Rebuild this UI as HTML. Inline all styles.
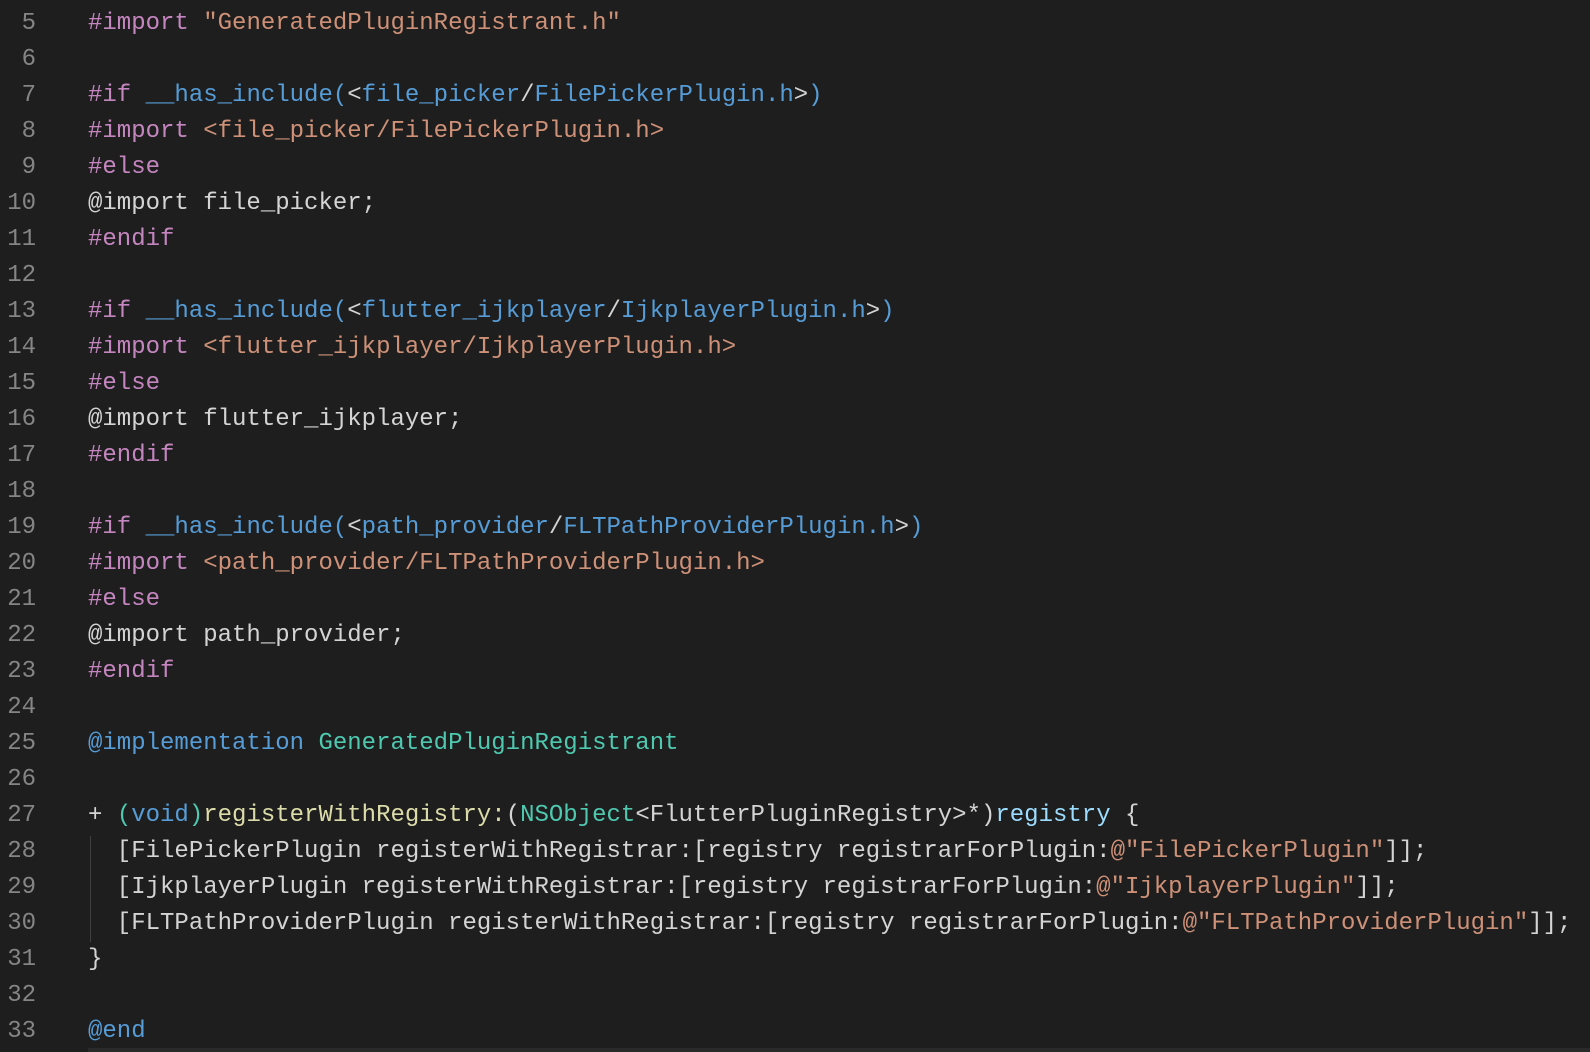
<!DOCTYPE html>
<html><head><meta charset="utf-8"><style>
body{margin:0;width:1590px;height:1052px;background:#1e1e1e;overflow:hidden;font-family:"Liberation Mono",monospace;font-size:24px;color:#d4d4d4}
#w{position:absolute;left:0;top:3px;width:1590px;height:1049px}
.l{position:absolute;left:0;height:36px;line-height:36px;white-space:pre;width:1590px}
.n{position:absolute;right:1554px;color:#858585;text-align:right}
.c{position:absolute;left:88px}
.k{color:#c586c0}.s{color:#ce9178}.b{color:#569cd6}.t{color:#4ec9b0}.y{color:#dcdcaa}.p{color:#9cdcfe}
.g{position:absolute;left:90px;top:833px;width:1px;height:106px;background:#404040}
.bot{position:absolute;left:88px;top:1048px;width:1502px;height:4px;background:#2a2a2a}
</style></head><body>
<div class="bot"></div>
<div id="w">
<div class="g"></div>
<div class="l" style="top:3px"><span class="n">5</span><span class="c"><span class="k">#import</span> <span class="s">"GeneratedPluginRegistrant.h"</span></span></div>
<div class="l" style="top:39px"><span class="n">6</span></div>
<div class="l" style="top:75px"><span class="n">7</span><span class="c"><span class="k">#if</span> <span class="b">__has_include(</span>&lt;<span class="b">file_picker</span>/<span class="b">FilePickerPlugin.h</span>&gt;<span class="b">)</span></span></div>
<div class="l" style="top:111px"><span class="n">8</span><span class="c"><span class="k">#import</span> <span class="s">&lt;file_picker/FilePickerPlugin.h&gt;</span></span></div>
<div class="l" style="top:147px"><span class="n">9</span><span class="c"><span class="k">#else</span></span></div>
<div class="l" style="top:183px"><span class="n">10</span><span class="c">@import file_picker;</span></div>
<div class="l" style="top:219px"><span class="n">11</span><span class="c"><span class="k">#endif</span></span></div>
<div class="l" style="top:255px"><span class="n">12</span></div>
<div class="l" style="top:291px"><span class="n">13</span><span class="c"><span class="k">#if</span> <span class="b">__has_include(</span>&lt;<span class="b">flutter_ijkplayer</span>/<span class="b">IjkplayerPlugin.h</span>&gt;<span class="b">)</span></span></div>
<div class="l" style="top:327px"><span class="n">14</span><span class="c"><span class="k">#import</span> <span class="s">&lt;flutter_ijkplayer/IjkplayerPlugin.h&gt;</span></span></div>
<div class="l" style="top:363px"><span class="n">15</span><span class="c"><span class="k">#else</span></span></div>
<div class="l" style="top:399px"><span class="n">16</span><span class="c">@import flutter_ijkplayer;</span></div>
<div class="l" style="top:435px"><span class="n">17</span><span class="c"><span class="k">#endif</span></span></div>
<div class="l" style="top:471px"><span class="n">18</span></div>
<div class="l" style="top:507px"><span class="n">19</span><span class="c"><span class="k">#if</span> <span class="b">__has_include(</span>&lt;<span class="b">path_provider</span>/<span class="b">FLTPathProviderPlugin.h</span>&gt;<span class="b">)</span></span></div>
<div class="l" style="top:543px"><span class="n">20</span><span class="c"><span class="k">#import</span> <span class="s">&lt;path_provider/FLTPathProviderPlugin.h&gt;</span></span></div>
<div class="l" style="top:579px"><span class="n">21</span><span class="c"><span class="k">#else</span></span></div>
<div class="l" style="top:615px"><span class="n">22</span><span class="c">@import path_provider;</span></div>
<div class="l" style="top:651px"><span class="n">23</span><span class="c"><span class="k">#endif</span></span></div>
<div class="l" style="top:687px"><span class="n">24</span></div>
<div class="l" style="top:723px"><span class="n">25</span><span class="c"><span class="b">@implementation</span> <span class="t">GeneratedPluginRegistrant</span></span></div>
<div class="l" style="top:759px"><span class="n">26</span></div>
<div class="l" style="top:795px"><span class="n">27</span><span class="c">+ <span class="t">(</span><span class="b">void</span><span class="t">)</span><span class="y">registerWithRegistry:</span>(<span class="t">NSObject</span>&lt;FlutterPluginRegistry&gt;*)<span class="p">registry</span> {</span></div>
<div class="l" style="top:831px"><span class="n">28</span><span class="c">  [FilePickerPlugin registerWithRegistrar:[registry registrarForPlugin:<span class="s">@"FilePickerPlugin"</span>]];</span></div>
<div class="l" style="top:867px"><span class="n">29</span><span class="c">  [IjkplayerPlugin registerWithRegistrar:[registry registrarForPlugin:<span class="s">@"IjkplayerPlugin"</span>]];</span></div>
<div class="l" style="top:903px"><span class="n">30</span><span class="c">  [FLTPathProviderPlugin registerWithRegistrar:[registry registrarForPlugin:<span class="s">@"FLTPathProviderPlugin"</span>]];</span></div>
<div class="l" style="top:939px"><span class="n">31</span><span class="c">}</span></div>
<div class="l" style="top:975px"><span class="n">32</span></div>
<div class="l" style="top:1011px"><span class="n">33</span><span class="c"><span class="b">@end</span></span></div>
</div>
</body></html>
